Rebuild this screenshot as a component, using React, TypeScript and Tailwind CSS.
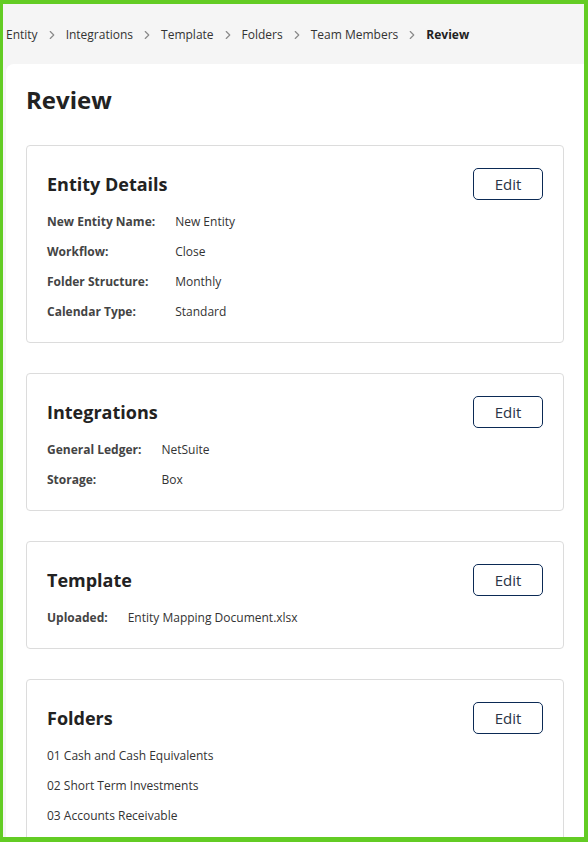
import { ChevronRight } from "lucide-react";

const crumbs = ["Entity", "Integrations", "Template", "Folders", "Team Members"];

type Row = [string, string];

function EditButton() {
  return (
    <button className="h-8 w-[70px] rounded-[5px] border border-[#0b2a55] bg-white text-[15px] text-[#2a3447]">
      Edit
    </button>
  );
}

function Card({ title, children }: { title: string; children: React.ReactNode }) {
  return (
    <div className="mb-[30px] rounded-[4px] border border-[#dcdcdc] bg-white p-5">
      <div className="flex h-9 items-center justify-between">
        <div className="text-[18px] font-bold text-[#222]">{title}</div>
        <EditButton />
      </div>
      <div className="mt-[10px]">{children}</div>
    </div>
  );
}

function Details({ rows }: { rows: Row[] }) {
  return (
    <div className="grid grid-cols-[auto_1fr] gap-x-5 gap-y-2.5 text-[12px]">
      {rows.map(([k, v]) => (
        <div key={k} className="contents">
          <div className="flex h-5 items-center font-bold text-[#444]">{k}</div>
          <div className="flex h-5 items-center text-[#333]">{v}</div>
        </div>
      ))}
    </div>
  );
}

export default function App() {
  return (
    <div
      className="box-border h-[842px] overflow-hidden border-t-4 border-r-4 border-b-[5px] border-l-[3px] border-[#63cc24] bg-[#f5f5f5]"
      style={{ fontFamily: '"Open Sans", sans-serif' }}
    >
      <div className="flex h-[60px] items-center pt-[2px] pl-[3px] text-[12px] text-[#333]">
        {crumbs.map((c) => (
          <span key={c} className="flex items-center">
            {c}
            <ChevronRight size={14} strokeWidth={2} className="mx-[7px] text-[#8a8a8a]" />
          </span>
        ))}
        <span className="font-bold text-[#222]">Review</span>
      </div>

      <div className="ml-[3px] rounded-tl-lg bg-white px-5 pt-5">
        <h1 className="mb-[29px] text-[24px] leading-8 font-bold text-[#222]">Review</h1>

        <Card title="Entity Details">
          <Details
            rows={[
              ["New Entity Name:", "New Entity"],
              ["Workflow:", "Close"],
              ["Folder Structure:", "Monthly"],
              ["Calendar Type:", "Standard"],
            ]}
          />
        </Card>

        <Card title="Integrations">
          <Details
            rows={[
              ["General Ledger:", "NetSuite"],
              ["Storage:", "Box"],
            ]}
          />
        </Card>

        <Card title="Template">
          <Details rows={[["Uploaded:", "Entity Mapping Document.xlsx"]]} />
        </Card>

        <Card title="Folders">
          <div className="flex flex-col gap-2.5 text-[12px] text-[#333]">
            {["01 Cash and Cash Equivalents", "02 Short Term Investments", "03 Accounts Receivable"].map((f) => (
              <div key={f} className="flex h-5 items-center">
                {f}
              </div>
            ))}
          </div>
        </Card>
      </div>
    </div>
  );
}
